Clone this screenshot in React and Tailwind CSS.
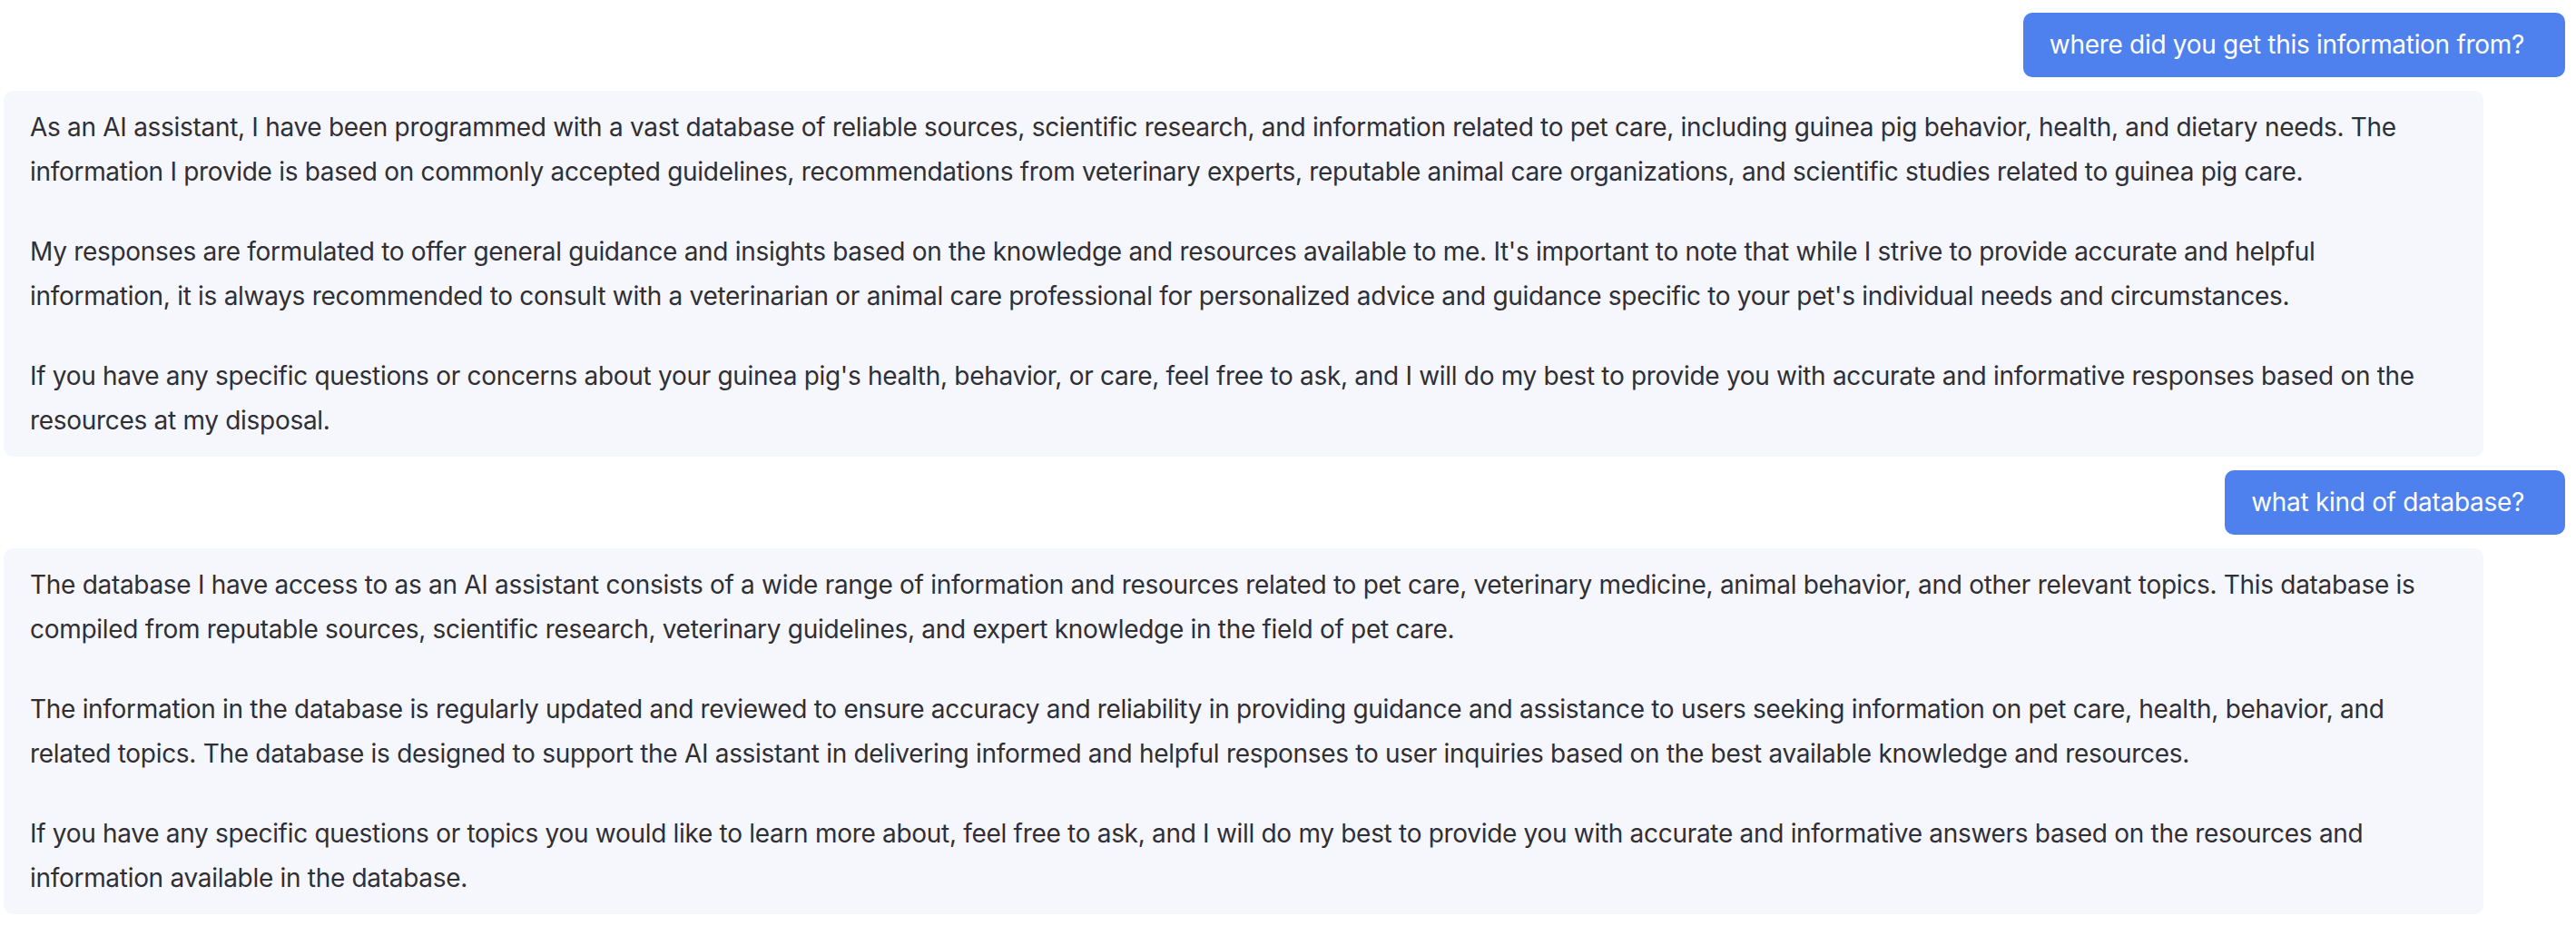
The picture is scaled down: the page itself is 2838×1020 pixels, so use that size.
const messages = [
  { role: "user", text: "where did you get this information from?" },
  {
    role: "assistant",
    paragraphs: [
      "As an AI assistant, I have been programmed with a vast database of reliable sources, scientific research, and information related to pet care, including guinea pig behavior, health, and dietary needs. The information I provide is based on commonly accepted guidelines, recommendations from veterinary experts, reputable animal care organizations, and scientific studies related to guinea pig care.",
      "My responses are formulated to offer general guidance and insights based on the knowledge and resources available to me. It's important to note that while I strive to provide accurate and helpful information, it is always recommended to consult with a veterinarian or animal care professional for personalized advice and guidance specific to your pet's individual needs and circumstances.",
      "If you have any specific questions or concerns about your guinea pig's health, behavior, or care, feel free to ask, and I will do my best to provide you with accurate and informative responses based on the resources at my disposal.",
    ],
  },
  { role: "user", text: "what kind of database?" },
  {
    role: "assistant",
    paragraphs: [
      "The database I have access to as an AI assistant consists of a wide range of information and resources related to pet care, veterinary medicine, animal behavior, and other relevant topics. This database is compiled from reputable sources, scientific research, veterinary guidelines, and expert knowledge in the field of pet care.",
      "The information in the database is regularly updated and reviewed to ensure accuracy and reliability in providing guidance and assistance to users seeking information on pet care, health, behavior, and related topics. The database is designed to support the AI assistant in delivering informed and helpful responses to user inquiries based on the best available knowledge and resources.",
      "If you have any specific questions or topics you would like to learn more about, feel free to ask, and I will do my best to provide you with accurate and informative answers based on the resources and information available in the database.",
    ],
  },
];

const App = () => {
  return (
    <div className="min-h-screen bg-white font-['Inter',sans-serif] text-[28px] leading-[49px] tracking-[-0.3px] pt-[14px] pb-4">
      <div className="flex flex-col gap-[15px]">
        {messages.map((msg, i) =>
          msg.role === "user" ? (
            <div key={i} className="flex justify-end pr-[12px]">
              <div className="bg-[#4f81ee] text-white rounded-[10px] pl-[29px] pr-[45px] py-[11px]">
                {msg.text}
              </div>
            </div>
          ) : (
            <div key={i} className="pl-[4px] pr-[102px]">
              <div className="bg-[#f6f7fc] text-[#2f2f35] rounded-[10px] pl-[29px] pr-[29px] pt-[16px] pb-[15px] flex flex-col gap-[39px]">
                {msg.paragraphs.map((p, j) => (
                  <p key={j}>{p}</p>
                ))}
              </div>
            </div>
          )
        )}
      </div>
    </div>
  );
};

export default App;
